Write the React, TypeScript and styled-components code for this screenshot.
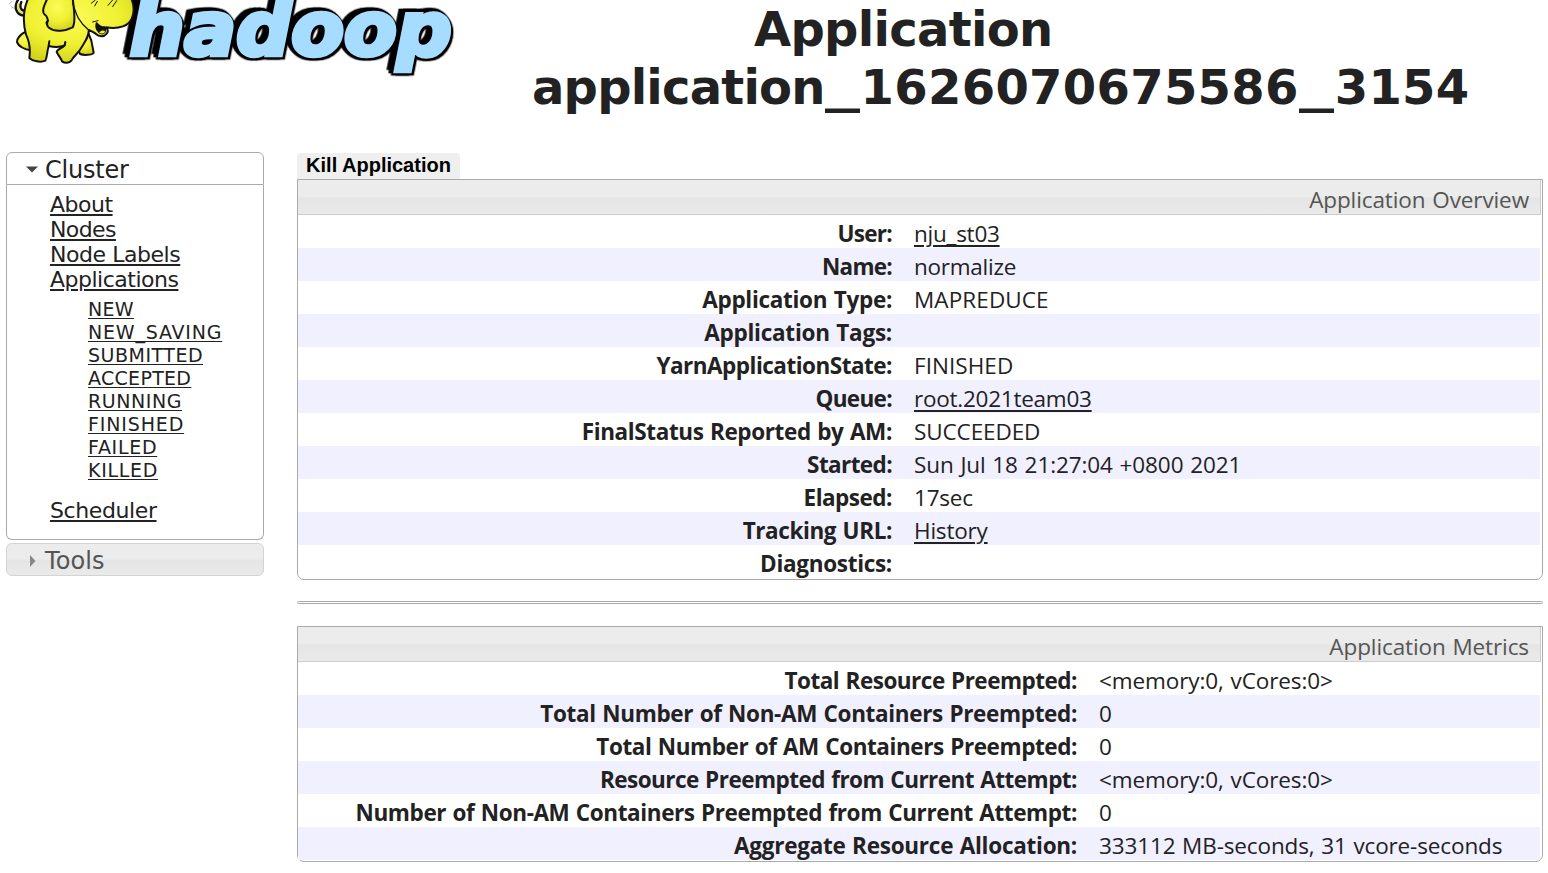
import React from "react";
import styled, { createGlobalStyle } from "styled-components";

const GlobalStyle = createGlobalStyle`
  * { box-sizing: border-box; }
  html, body { margin: 0; background: #fff; }
  body { width: 1548px; height: 873px; overflow: hidden; color: #222; }
  a { color: inherit; }
`;

const verdana = `"DejaVu Sans", sans-serif`;
const segoe = `"Open Sans", "Noto Sans", sans-serif`;
const bar = `linear-gradient(#ececec 0%, #ececec 48%, #e5e5e5 54%, #eaeaea 100%)`;

const Page = styled.div`
  height: 873px;
  overflow: hidden;
`;

const Header = styled.header`
  display: flex;
  height: 152px;
`;

const LogoSvg = styled.svg`
  display: block;
  flex: none;
`;

const Wordmark = styled.text`
  font: italic bold 226px ${verdana};
  fill: #a5dcff;
  stroke: #a5dcff;
  stroke-width: 14px;
  stroke-linejoin: miter;
  filter: drop-shadow(7px 7px 0 #000) drop-shadow(-6px -10px 0 #000) drop-shadow(-14px 0 0 #000);
`;

const Title = styled.h1`
  margin: 0 0 0 68px;
  font: bold 48px/58px ${verdana};
  white-space: nowrap;
`;

const TitleLine = styled.div<{ $indent?: number }>`
  padding-left: ${(p) => p.$indent ?? 0}px;
`;

const Spaced = styled.span<{ $ls: number }>`
  letter-spacing: ${(p) => p.$ls}px;
`;

const Underscore = styled.span`
  display: inline-block;
  width: 36px;
  transform: translateY(-2px) scaleX(1.46);
  transform-origin: left;
`;

const Columns = styled.div`
  display: flex;
  align-items: flex-start;
  gap: 33px;
  padding: 0 5px 0 6px;
`;

const Sidebar = styled.nav`
  width: 258px;
  flex: none;
  font-family: ${verdana};
`;

const Section = styled.h3<{ $closed?: boolean }>`
  display: flex;
  align-items: center;
  gap: 7px;
  height: 33px;
  margin: ${(p) => (p.$closed ? "3px 0 0" : "0")};
  padding: 2px 0 0 19px;
  border: 1px solid ${(p) => (p.$closed ? "#d3d3d3" : "#aaa")};
  border-radius: ${(p) => (p.$closed ? "6px" : "6px 6px 0 0")};
  background: ${(p) => (p.$closed ? bar : "#fff")};
  color: ${(p) => (p.$closed ? "#555" : "#222")};
  font-size: 24px;
  font-weight: normal;
  line-height: 31px;
  letter-spacing: ${(p) => (p.$closed ? 0.1 : -0.2)}px;
`;

const SectionName = styled.span`
  padding-top: 2px;
`;

const SectionBody = styled.div`
  height: 355px;
  padding: 7px 0 0 43px;
  border: 1px solid #aaa;
  border-top: 0;
  border-radius: 0 0 6px 6px;
`;

const List = styled.ul<{ $sub?: boolean }>`
  margin: ${(p) => (p.$sub ? "6px 0 16px 38px" : "0")};
  padding: 0;
  list-style: none;
  font-size: ${(p) => (p.$sub ? 19 : 22)}px;
  line-height: ${(p) => (p.$sub ? 23 : 25)}px;
`;

const NavLink = styled.a<{ $ls: number }>`
  letter-spacing: ${(p) => p.$ls}px;
  text-underline-offset: 2px;
`;

const Main = styled.main`
  flex: 1;
`;

const KillButton = styled.button`
  display: block;
  width: 163px;
  height: 26px;
  margin-top: 1px;
  padding: 0 0 1px;
  border: 0;
  border-radius: 3px 3px 0 0;
  background: #efefef;
  color: #000;
  font: bold 20px/23px "Liberation Sans", sans-serif;
`;

const Card = styled.section`
  padding: 0 1px 1px 0;
  border: 1px solid #aaa;
  border-radius: 0 0 7px 7px;
  font-family: ${segoe};
`;

const CardTitle = styled.div`
  height: 35px;
  padding: 3px 11px 0 0;
  border: 1px solid #ccc;
  border-width: 0 1px 1px 0;
  background: ${bar};
  color: #555;
  font-size: 22.5px;
  line-height: 34px;
  letter-spacing: -0.1px;
  word-spacing: 1px;
  text-align: right;
`;

const Row = styled.div<{ $split: number }>`
  display: grid;
  grid-template-columns: ${(p) => p.$split}px 1fr;
  gap: 22px;
  height: 33px;
  margin-right: 1px;
  padding-top: 3px;
  font-size: 22.5px;
  line-height: 32px;
  word-spacing: 1px;
  white-space: nowrap;
  &:nth-child(odd) { background: #f1f0ff; }
`;

const Label = styled.div<{ $ls: number }>`
  font-weight: 700;
  text-align: right;
  letter-spacing: ${(p) => p.$ls}px;
`;

const Value = styled.div<{ $ls: number }>`
  letter-spacing: ${(p) => p.$ls}px;
`;

const ValueLink = styled.a`
  text-underline-offset: 3px;
  text-decoration-thickness: 2px;
`;

const Divider = styled.hr`
  height: 3px;
  margin: 21px 0 22px;
  border: 1px solid #aaa;
  border-radius: 2px;
`;

type Item = { label: string; value?: string; link?: boolean; lls?: number; vls?: number };

const overview: Item[] = [
  { label: "User:", value: "nju_st03", link: true, lls: -0.7, vls: -0.25 },
  { label: "Name:", value: "normalize", lls: -0.75, vls: -0.25 },
  { label: "Application Type:", value: "MAPREDUCE", lls: -0.3, vls: 0.1 },
  { label: "Application Tags:", lls: -0.25 },
  { label: "YarnApplicationState:", value: "FINISHED", vls: 0.05 },
  { label: "Queue:", value: "root.2021team03", link: true, lls: -0.65, vls: -0.25 },
  { label: "FinalStatus Reported by AM:", value: "SUCCEEDED", lls: -0.38, vls: -0.1 },
  { label: "Started:", value: "Sun Jul 18 21:27:04 +0800 2021", lls: -0.6, vls: -0.1 },
  { label: "Elapsed:", value: "17sec", vls: -0.2 },
  { label: "Tracking URL:", value: "History", link: true, lls: -0.4, vls: -0.2 },
  { label: "Diagnostics:", lls: -0.3 },
];

const metrics: Item[] = [
  { label: "Total Resource Preempted:", value: "<memory:0, vCores:0>", vls: -0.1 },
  { label: "Total Number of Non-AM Containers Preempted:", value: "0", lls: -0.34 },
  { label: "Total Number of AM Containers Preempted:", value: "0", lls: -0.42 },
  { label: "Resource Preempted from Current Attempt:", value: "<memory:0, vCores:0>", lls: -0.53, vls: -0.1 },
  { label: "Number of Non-AM Containers Preempted from Current Attempt:", value: "0", lls: -0.4 },
  { label: "Aggregate Resource Allocation:", value: "333112 MB-seconds, 31 vcore-seconds", lls: -0.26, vls: -0.13 },
];

const states: [string, number][] = [
  ["NEW", 0.3],
  ["NEW_SAVING", 0.8],
  ["SUBMITTED", 0.5],
  ["ACCEPTED", 0.3],
  ["RUNNING", 0.55],
  ["FINISHED", 0.85],
  ["FAILED", 0.7],
  ["KILLED", 0.7],
];

function InfoCard({ title, split, items }: { title: string; split: number; items: Item[] }) {
  return (
    <Card>
      <CardTitle>{title}</CardTitle>
      {items.map((it) => (
        <Row key={it.label} $split={split}>
          <Label $ls={it.lls ?? -0.5}>{it.label}</Label>
          <Value $ls={it.vls ?? -0.4}>
            {it.link ? <ValueLink href="#">{it.value}</ValueLink> : it.value}
          </Value>
        </Row>
      ))}
    </Card>
  );
}

function Logo() {
  return (
    <LogoSvg width="464" height="80" viewBox="0 0 1392 240">
      <defs>
        <radialGradient id="skin" cx="0.45" cy="0.3" r="0.7">
          <stop offset="0" stopColor="#fbfb5a" />
          <stop offset="0.6" stopColor="#f0f032" />
          <stop offset="1" stopColor="#d3d31c" />
        </radialGradient>
      </defs>
      <path d="M398 -10H425V40L386 90L398 30Z" fill="#000" />
      <Wordmark x="389" y="164" textLength="966" lengthAdjust="spacingAndGlyphs">hadoop</Wordmark>
      <g stroke="#111" strokeWidth="6" strokeLinejoin="round" strokeLinecap="round" fill="url(#skin)">
        <path d="M74 46C56 48 44 32 48 14C50 4 56 -4 62 -8M74 32C62 32 58 20 64 6" fill="none" stroke="#111" strokeWidth="7" />
        <path d="M72 40C60 38 51 28 54 12" fill="none" stroke="#dede30" strokeWidth="5" />
        <path d="M76 96C64 100 50 116 51 126C54 138 76 150 90 150L104 120Z" />
        <path d="M262 92L274 122L281 158C276 166 250 166 240 162L228 130Z" />
        <path d="M86 -8C68 30 68 66 78 104C88 124 92 146 88 174C98 184 122 188 136 182C142 172 140 158 146 138C164 142 180 142 194 136C186 146 170 148 170 156C176 168 184 176 186 184C194 190 208 190 214 182C222 166 236 160 246 140C258 120 268 106 266 90C276 94 284 98 288 102C296 110 312 112 319 102C326 96 324 88 318 82C354 88 390 80 398 48C404 28 400 8 392 -10Z" />
        <path d="M146 136L148 124M194 136L196 126" fill="none" />
        <path d="M290 70C286 86 294 98 308 98C316 94 318 86 314 82C304 82 296 78 290 70Z" fill="#111" />
        <path d="M300 94C306 88 314 90 316 94C314 104 302 104 296 98Z" fill="#ecec38" strokeWidth="3" />
        <path d="M144 -8C132 16 124 34 134 44C140 46 142 54 144 62C140 68 140 80 148 84C166 98 198 92 218 82C230 64 220 20 218 -8" />
        <path d="M218 10C230 46 236 66 266 90M144 62C138 64 136 70 142 76" fill="none" strokeWidth="4" />
        <path d="M274 10L286 0M284 18L292 4M324 16L338 0M338 20L350 2M278 66L294 62" fill="none" strokeWidth="3" />
        <path d="M28 12L36 4M34 20L44 26M40 0L44 -4" fill="none" stroke="#888" strokeWidth="2" />
      </g>
    </LogoSvg>
  );
}

export default function App() {
  return (
    <Page>
      <GlobalStyle />
      <Header>
        <Logo />
        <Title>
          <TitleLine $indent={222}><Spaced $ls={-0.7}>Application</Spaced></TitleLine>
          <TitleLine>
            <Spaced $ls={-0.8}>application</Spaced>
            <Underscore>_</Underscore>
            <Spaced $ls={0.3}>1626070675586</Spaced>
            <Underscore>_</Underscore>
            <Spaced $ls={0.3}>3154</Spaced>
          </TitleLine>
        </Title>
      </Header>
      <Columns>
        <Sidebar>
          <Section>
            <svg width="12" height="7" viewBox="0 0 12 7"><path d="M0 .5H12L6 6.5Z" fill="#444" /></svg>
            <SectionName>Cluster</SectionName>
          </Section>
          <SectionBody>
            <List>
              <li><NavLink $ls={-0.5} href="#">About</NavLink></li>
              <li><NavLink $ls={-0.6} href="#">Nodes</NavLink></li>
              <li><NavLink $ls={-0.45} href="#">Node Labels</NavLink></li>
              <li>
                <NavLink $ls={-0.5} href="#">Applications</NavLink>
                <List $sub>
                  {states.map(([s, ls]) => (
                    <li key={s}><NavLink $ls={ls} href="#">{s}</NavLink></li>
                  ))}
                </List>
              </li>
              <li><NavLink $ls={-0.4} href="#">Scheduler</NavLink></li>
            </List>
          </SectionBody>
          <Section $closed>
            <svg width="12" height="12" viewBox="0 0 12 12"><path d="M4 0L9.5 6L4 12Z" fill="#888" /></svg>
            <SectionName>Tools</SectionName>
          </Section>
        </Sidebar>
        <Main>
          <KillButton>Kill Application</KillButton>
          <InfoCard title="Application Overview" split={594} items={overview} />
          <Divider />
          <InfoCard title="Application Metrics" split={779} items={metrics} />
        </Main>
      </Columns>
    </Page>
  );
}
